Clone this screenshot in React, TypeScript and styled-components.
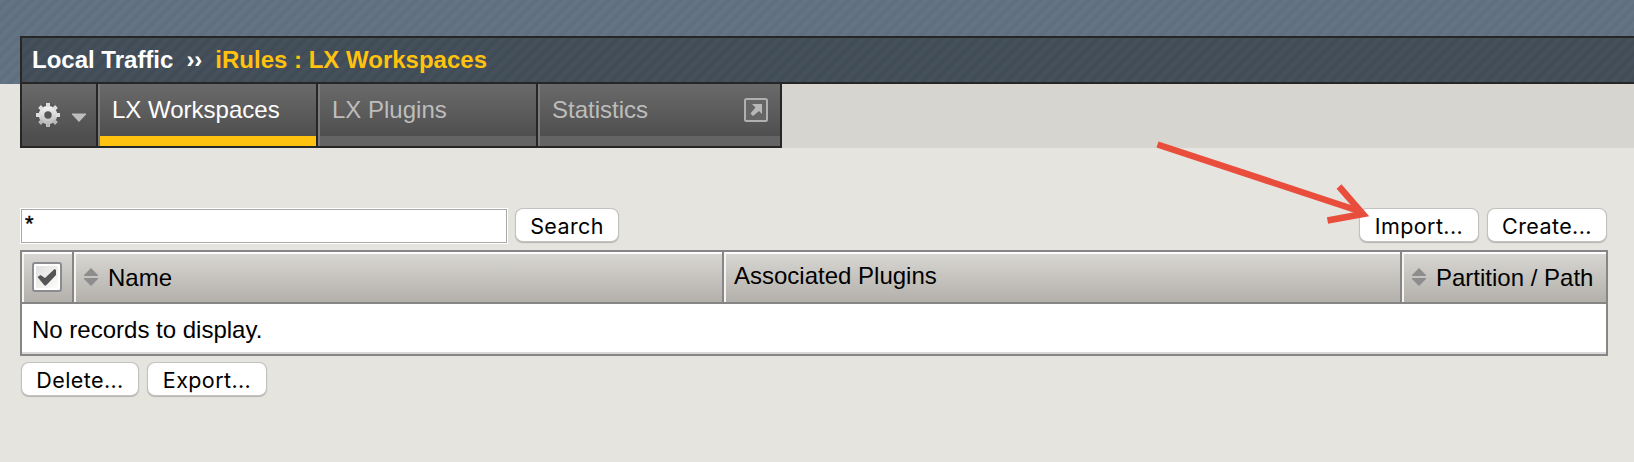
import React from 'react';
import styled, { createGlobalStyle, css } from 'styled-components';

const Global = createGlobalStyle`
  * { box-sizing: border-box; }
  body { margin: 0; background: #e5e4df; font-family: "Liberation Sans", Arial, sans-serif; font-size: 24px; color: #000; }
`;

const Page = styled.div`
  position: relative;
  width: 1634px;
  height: 462px;
  overflow: hidden;
  background: #e5e4df;
`;

const stripes = css`
  background-image: repeating-linear-gradient(135deg, rgba(255, 255, 255, 0.018) 0 3px, rgba(0, 0, 0, 0.02) 5px 7px, rgba(255, 255, 255, 0.018) 8.485px);
`;

const Banner = styled.header`
  height: 84px;
  padding: 36px 0 0 20px;
  background-color: #617182;
  ${stripes}
`;

const Breadcrumb = styled.h1`
  display: flex;
  align-items: center;
  height: 48px;
  margin: 0;
  padding: 0 0 0 10px;
  border: 2px solid #262626;
  border-right: 0;
  background-color: #414d58;
  ${stripes}
  color: #fff;
  font-size: 24px;
  font-weight: bold;
  line-height: 28px;
  white-space: pre;
`;

const Separator = styled.span`
  margin: 0 13px;
`;

const Current = styled.span`
  color: #ffc20e;
`;

const TabStrip = styled.nav`
  display: flex;
  height: 64px;
  padding-left: 20px;
  background: linear-gradient(to right, #e5e4df 20px, #d6d5d0 20px);
`;

const Tabs = styled.div`
  display: flex;
  border: solid #262626;
  border-width: 0 2px 2px;
`;

const GearCell = styled.div`
  display: flex;
  align-items: center;
  width: 74px;
  padding: 0 0 0 12px;
  background: linear-gradient(#6a6a6a, #4e4e4e 85%);
`;

const Tab = styled.div<{ $width: number; $active?: boolean }>`
  display: flex;
  justify-content: space-between;
  width: ${(p) => p.$width}px;
  padding: 12px 12px 0;
  border-bottom: 10px solid ${(p) => (p.$active ? '#ffc20e' : '#646464')};
  background: linear-gradient(#6a6a6a, #4f4f4f);
  color: ${(p) => (p.$active ? '#fff' : '#bdbdbd')};
  line-height: 28px;
`;

const TabEdge = styled.div`
  width: 4px;
  border-left: 2px solid #262626;
  background: #7b7b7b;
`;

const Content = styled.main`
  padding: 60px 26px 0 20px;
`;

const Toolbar = styled.div`
  display: flex;
  align-items: flex-start;
  height: 42px;
`;

const SearchField = styled.input`
  width: 486px;
  height: 34px;
  margin: 1px;
  padding: 0 3px 4px;
  border: 1px solid #a9a9a9;
  border-radius: 0;
  outline: 1px solid #fff;
  background: #fff;
  font: 22px "Liberation Sans", Arial, sans-serif;
  -webkit-text-stroke: 0.4px #000;
  color: #000;
`;

const Button = styled.button<{ $width: number }>`
  width: ${(p) => p.$width}px;
  height: 32px;
  padding: 2px 0 0;
  border: 0;
  border-radius: 7px;
  background: #fff;
  box-shadow: 0 0 0 1px #c3c2be, 0 1px 1px 1px #b4b3af;
  font: 21.5px/30px Inter, "Liberation Sans", sans-serif;
  letter-spacing: 0.4px;
  color: #000;
`;

const SearchSlot = styled.div`
  padding: 1px 0 0 8px;
`;

const Actions = styled.div<{ $end?: boolean }>`
  display: flex;
  gap: 10px;
  padding: 1px 2px 0;
  margin-left: ${(p) => (p.$end ? 'auto' : '0')};
`;

const Table = styled.section`
  width: 1588px;
  border: 2px solid #868686;
`;

const HeadRow = styled.div`
  display: flex;
  height: 52px;
  border-bottom: 2px solid #868686;
`;

const HeadCell = styled.div<{ $width: number; $pad: number; $lift?: number }>`
  display: flex;
  align-items: center;
  width: ${(p) => p.$width}px;
  padding: 0 0 ${(p) => p.$lift ?? 0}px ${(p) => p.$pad}px;
  border-top: 2px solid #fff;
  border-left: 2px solid #f4f4f3;
  background: linear-gradient(#d8d6d2, #b3b0ab) padding-box;
  line-height: 28px;
  & + & { box-shadow: -2px 0 0 #868686; margin-left: 2px; }
`;

const Check = styled.span`
  display: flex;
  width: 30px;
  height: 30px;
  margin-bottom: 2px;
  border: 2px solid #8b8c90;
  border-radius: 3px;
  background: linear-gradient(135deg, #dededb, #fff);
  box-shadow: inset 0 0 0 2px #fff;
`;

const SortMark = styled.svg`
  margin: 0 9px 2px 0;
`;

const EmptyRow = styled.div`
  height: 50px;
  padding: 12px 10px 0;
  border-bottom: 2px solid #d9d9d9;
  background: #fff;
  line-height: 28px;
`;

const Footer = styled.div`
  padding-top: 6px;
`;

const Arrow = styled.svg`
  position: absolute;
  left: 1150px;
  top: 130px;
`;

const Sorter = () => (
  <SortMark width="16" height="20" viewBox="0 0 16 20">
    <path d="M1 9V8L8 1l7 7v1zM1 11h14v1l-7 7-7-7z" fill="#8d8d8d" />
  </SortMark>
);

const teeth = [0, 45, 90, 135, 180, 225, 270, 315];

const Gear = () => (
  <svg width="28" height="28" viewBox="0 0 28 28">
    <defs>
      <linearGradient id="metal" x1="0" y1="2" x2="0" y2="26" gradientUnits="userSpaceOnUse">
        <stop offset="0" stopColor="#fff" />
        <stop offset="1" stopColor="#b0b0b0" />
      </linearGradient>
    </defs>
    <circle cx="14" cy="14" r="12" fill="#484848" opacity="0.25" />
    <circle cx="14" cy="14" r="6.5" fill="none" stroke="url(#metal)" strokeWidth="5.6" />
    {teeth.map((a) => (
      <path
        key={a}
        transform={`rotate(${a} 14 14)`}
        d="M12 6V2h4v4z"
        fill={a > 90 && a < 270 ? '#b8b8b8' : '#dedede'}
      />
    ))}
  </svg>
);

export default function App() {
  return (
    <Page>
      <Global />
      <Banner>
        <Breadcrumb>
          Local Traffic<Separator>››</Separator>
          <Current>iRules : LX Workspaces</Current>
        </Breadcrumb>
      </Banner>
      <TabStrip>
        <Tabs>
          <GearCell>
            <Gear />
            <svg width="34" height="28" viewBox="0 0 34 28">
              <path d="M10 12.5h14v1L17 21l-7-7.5z" fill="#bdbdbd" />
            </svg>
          </GearCell>
          <TabEdge />
          <Tab $width={216} $active>LX Workspaces</Tab>
          <TabEdge />
          <Tab $width={216}>LX Plugins</Tab>
          <TabEdge />
          <Tab $width={240}>
            Statistics
            <svg width="24" height="28" viewBox="0 0 24 28">
              <rect x="1" y="3" width="22" height="22" rx="1.5" fill="#666" stroke="#b0b0b0" strokeWidth="2" />
              <path d="M8 8h10v10l-3-3-6 5-2.5-2.5 5-6z" fill="#b8b8b8" />
            </svg>
          </Tab>
        </Tabs>
      </TabStrip>
      <Content>
        <Toolbar>
          <SearchField defaultValue="*" />
          <SearchSlot>
            <Button $width={102}>Search</Button>
          </SearchSlot>
          <Actions $end>
            <Button $width={118}>Import...</Button>
            <Button $width={118}>Create...</Button>
          </Actions>
        </Toolbar>
        <Table>
          <HeadRow>
            <HeadCell $width={50} $pad={8}>
              <Check>
                <svg width="26" height="26" viewBox="0 0 26 26">
                  <path d="M3.5 13l3-2 4.5 3 9.5-9 1.5 1v5L12 21.5h-1.5z" fill="#555" />
                </svg>
              </Check>
            </HeadCell>
            <HeadCell $width={648} $pad={7}><Sorter />Name</HeadCell>
            <HeadCell $width={676} $pad={8} $lift={5}>Associated Plugins</HeadCell>
            <HeadCell $width={204} $pad={7}><Sorter />Partition / Path</HeadCell>
          </HeadRow>
          <EmptyRow>No records to display.</EmptyRow>
        </Table>
        <Footer>
          <Actions>
            <Button $width={116}>Delete...</Button>
            <Button $width={118}>Export...</Button>
          </Actions>
        </Footer>
      </Content>
      <Arrow width="230" height="100" viewBox="1150 130 230 100">
        <path d="M1157.5 144.5 1362 212" stroke="#e94e3d" strokeWidth="6.5" fill="none" />
        <path d="M1339 186.5 1363 214 1327.5 220.5" stroke="#e94e3d" strokeWidth="6.5" fill="none" />
      </Arrow>
    </Page>
  );
}
